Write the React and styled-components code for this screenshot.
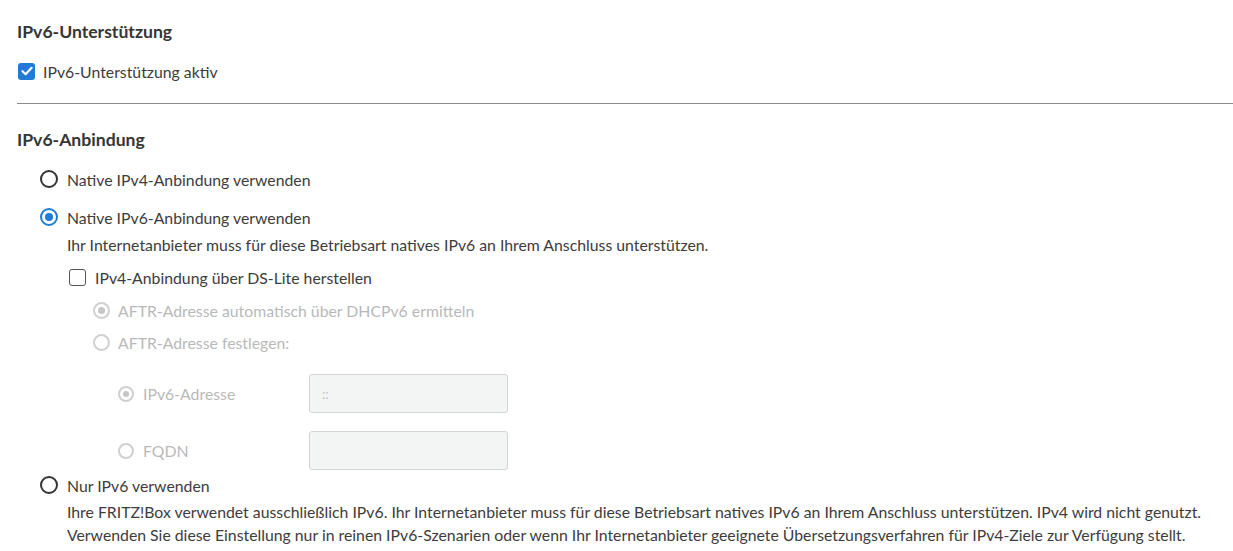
import React from "react";
import styled, { createGlobalStyle } from "styled-components";

const GlobalStyle = createGlobalStyle`
  body {
    margin: 0;
    background: #ffffff;
    font-family: Lato, "Liberation Sans", sans-serif;
    color: #3c3c3c;
  }
`;

const Page = styled.div`
  padding: 21px 0 0 17px;
`;

const Title = styled.h2`
  margin: ${(p) => p.$top || 0}px 0 0 0;
  font-size: 17.6px;
  font-weight: 700;
  line-height: 22px;
  color: #353535;
`;

const Divider = styled.hr`
  margin: 20px 0 0 0;
  border: 0;
  border-top: 1px solid #8c8c8c;
  height: 0;
`;

const Row = styled.div`
  display: flex;
  align-items: center;
  height: ${(p) => p.$h || 24}px;
  margin-top: ${(p) => p.$top || 0}px;
  margin-left: ${(p) => p.$indent || 0}px;
  font-size: 15.8px;
  color: ${(p) => (p.$disabled ? "#b9b9b9" : "#3c3c3c")};
`;

const Box = styled.span`
  width: 17px;
  height: 17px;
  box-sizing: border-box;
  border-radius: 3px;
  margin-right: ${(p) => p.$gap || 8}px;
  display: flex;
  align-items: center;
  justify-content: center;
  background: ${(p) => (p.$checked ? "#1f7bd6" : "#fff")};
  border: ${(p) => (p.$checked ? "none" : "1.5px solid #555")};
  flex-shrink: 0;
`;

const Radio = styled.span`
  width: ${(p) => p.$size || 18}px;
  height: ${(p) => p.$size || 18}px;
  box-sizing: border-box;
  border-radius: 50%;
  margin-right: ${(p) => p.$gap || 9}px;
  border: 2px solid
    ${(p) => (p.$disabled ? "#d0d0d0" : p.$checked ? "#1f7bd6" : "#333")};
  display: flex;
  align-items: center;
  justify-content: center;
  flex-shrink: 0;

  &::after {
    content: "";
    display: ${(p) => (p.$checked ? "block" : "none")};
    width: ${(p) => (p.$size || 18) - 10}px;
    height: ${(p) => (p.$size || 18) - 10}px;
    border-radius: 50%;
    background: ${(p) => (p.$disabled ? "#c6c6c6" : "#1f7bd6")};
  }
`;

const Text = styled.p`
  margin: ${(p) => p.$top || 0}px 0 0 ${(p) => p.$indent || 0}px;
  font-size: 15.8px;
  line-height: 23px;
  color: #3c3c3c;
`;

const FieldLabel = styled.span`
  width: 166px;
`;

const Input = styled.div`
  width: 199px;
  height: 39px;
  box-sizing: border-box;
  border: 1px solid #d3d5d5;
  border-radius: 3px;
  background: #f3f4f4;
  color: #c4c4c4;
  font-size: 13px;
  display: flex;
  align-items: center;
  padding-left: 12px;
`;

const Check = () => (
  <svg width="12" height="10" viewBox="0 0 12 10">
    <path d="M1.5 5.2 L4.6 8.2 L10.6 1.8" fill="none" stroke="#fff" strokeWidth="2.2" strokeLinecap="round" strokeLinejoin="round" />
  </svg>
);

export default function App() {
  return (
    <Page>
      <GlobalStyle />
      <Title>IPv6-Unterstützung</Title>
      <Row $top={16} $indent={1}>
        <Box $checked><Check /></Box>
        IPv6-Unterstützung aktiv
      </Row>
      <Divider />
      <Title $top={25}>IPv6-Anbindung</Title>

      <Row $top={16} $indent={23}>
        <Radio />
        Native IPv4-Anbindung verwenden
      </Row>
      <Row $top={14} $indent={23}>
        <Radio $checked />
        Native IPv6-Anbindung verwenden
      </Row>
      <Text $top={4} $indent={50}>
        Ihr Internetanbieter muss für diese Betriebsart natives IPv6 an Ihrem Anschluss unterstützen.
      </Text>
      <Row $top={9} $indent={52}>
        <Box $gap={9} />
        IPv4-Anbindung über DS-Lite herstellen
      </Row>
      <Row $top={9} $indent={76} $disabled>
        <Radio $checked $disabled $size={17} $gap={8} />
        AFTR-Adresse automatisch über DHCPv6 ermitteln
      </Row>
      <Row $top={8} $indent={76} $disabled>
        <Radio $disabled $size={17} $gap={8} />
        AFTR-Adresse festlegen:
      </Row>
      <Row $top={20} $h={39} $indent={101} $disabled>
        <Radio $checked $disabled $size={16} $gap={9} />
        <FieldLabel>IPv6-Adresse</FieldLabel>
        <Input>::</Input>
      </Row>
      <Row $top={18} $h={39} $indent={101} $disabled>
        <Radio $disabled $size={16} $gap={9} />
        <FieldLabel>FQDN</FieldLabel>
        <Input />
      </Row>
      <Row $top={3} $indent={23}>
        <Radio />
        Nur IPv6 verwenden
      </Row>
      <Text $top={3} $indent={50}>
        Ihre FRITZ!Box verwendet ausschließlich IPv6. Ihr Internetanbieter muss für diese Betriebsart natives IPv6 an Ihrem Anschluss unterstützen. IPv4 wird nicht genutzt.
        <br />
        Verwenden Sie diese Einstellung nur in reinen IPv6-Szenarien oder wenn Ihr Internetanbieter geeignete Übersetzungsverfahren für IPv4-Ziele zur Verfügung stellt.
      </Text>
    </Page>
  );
}
